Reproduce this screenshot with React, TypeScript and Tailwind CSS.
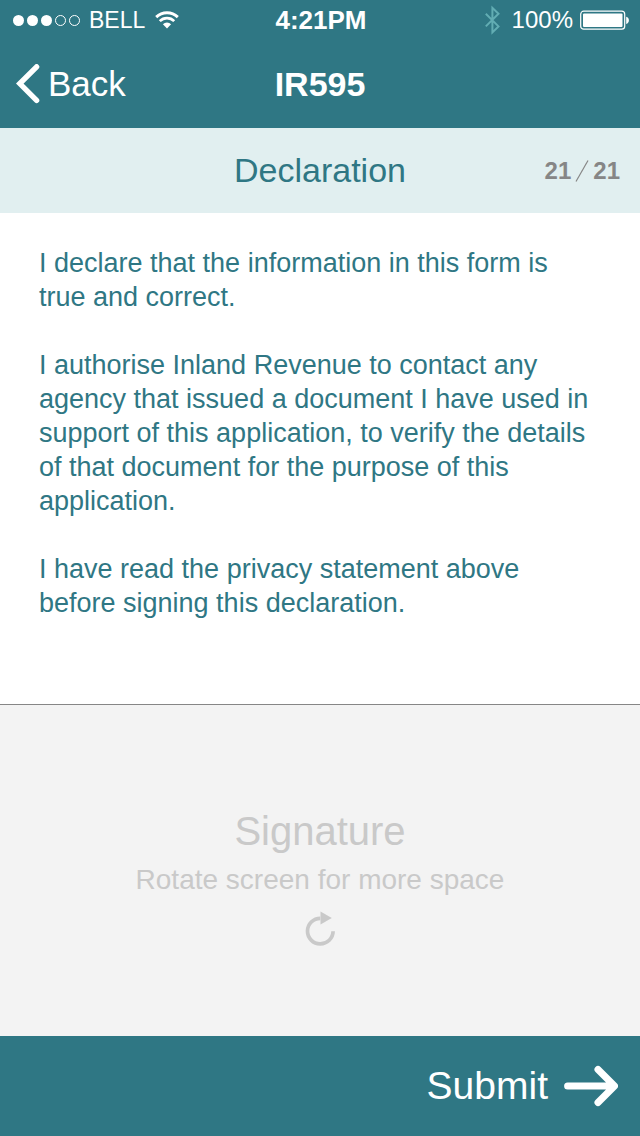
function SignalDots() {
  return (
    <svg viewBox="0 0 68 12" className="h-3 w-17" role="img" aria-label="Signal strength 3 of 5">
      <circle cx="6.5" cy="6.5" r="5.5" fill="#fff" />
      <circle cx="20.5" cy="6.5" r="5.5" fill="#fff" />
      <circle cx="34.5" cy="6.5" r="5.5" fill="#fff" />
      <circle cx="48.5" cy="6.5" r="5" fill="none" stroke="#fff" />
      <circle cx="62.5" cy="6.5" r="5" fill="none" stroke="#fff" />
    </svg>
  );
}

function WifiIcon() {
  return (
    <svg viewBox="0 0 24 18" className="h-[18px] w-6" fill="none" stroke="#fff" aria-hidden="true">
      <path d="M1.2 6.1 A15.5 15.5 0 0 1 22.8 6.1" strokeWidth="2.9" />
      <path d="M4.8 10.1 A10.2 10.2 0 0 1 19.2 10.1" strokeWidth="2.7" />
      <path d="M7.9 13.2 A5.8 5.8 0 0 1 16.1 13.2 L12 17.4 Z" fill="#fff" stroke="none" />
    </svg>
  );
}

function BluetoothIcon() {
  return (
    <svg viewBox="0 0 16 30" className="h-[30px] w-4" fill="none" stroke="#62adb3" strokeWidth="2" aria-hidden="true">
      <path d="M0.8 8.8 L13.5 21.4 L7.4 27.4 V2.8 L13.5 8.8 L0.8 21.4" />
    </svg>
  );
}

function BatteryIcon() {
  return (
    <svg viewBox="0 0 50 20" className="h-5 w-[50px]" aria-hidden="true">
      <rect x="0.7" y="1.2" width="44" height="18" rx="3" fill="none" stroke="#fff" strokeWidth="1.2" />
      <rect x="3" y="3.5" width="39.5" height="13.5" rx="1" fill="#fff" />
      <path d="M46.2 6.8 C49.8 7.6 49.8 13.2 46.2 14 Z" fill="#fff" />
    </svg>
  );
}

function StatusBar() {
  return (
    <div className="grid h-10 grid-cols-[1fr_auto_1fr] items-center pr-[10px] pl-3 text-2xl">
      <div className="flex items-center">
        <SignalDots />
        <span className="ml-[9px] text-[23px]">BELL</span>
        <span className="ml-[10px]">
          <WifiIcon />
        </span>
      </div>
      <span className="text-[26px] font-bold">4:21PM</span>
      <div className="flex items-center justify-end">
        <BluetoothIcon />
        <span className="mr-[7px] ml-[11px]">100%</span>
        <BatteryIcon />
      </div>
    </div>
  );
}

export default function App() {
  return (
    <div className="flex min-h-screen flex-col bg-white font-['Liberation_Sans',Arial,sans-serif]">
      <header className="bg-[#2f7784] text-white">
        <StatusBar />
        <div className="grid h-22 grid-cols-[1fr_auto_1fr] items-center px-4">
          <button type="button" className="flex items-center gap-2 justify-self-start text-[35px]">
            <svg
              viewBox="0 0 24 40"
              className="h-10 w-6"
              fill="none"
              stroke="#fff"
              strokeWidth="5.4"
              strokeLinecap="round"
              aria-hidden="true"
            >
              <path d="M20.6 2.8 L3.8 19.6 L20.6 36.4" />
            </svg>
            Back
          </button>
          <h1 className="text-[34px] font-bold">IR595</h1>
        </div>
      </header>

      <div className="grid h-[85px] grid-cols-[1fr_auto_1fr] items-center bg-[#e1eff0] px-5">
        <h2 className="col-start-2 text-[34px] text-[#2f7784]">Declaration</h2>
        <p className="flex items-center gap-1 justify-self-end text-2xl font-bold text-[#868686]">
          <span>21</span>
          <svg viewBox="0 0 14 24" className="h-6 w-[14px]" stroke="#868686" strokeWidth="1.2" aria-hidden="true">
            <path d="M1 22.5 L13 1.5" />
          </svg>
          <span>21</span>
        </p>
      </div>

      <main className="flex grow flex-col">
        <div className="space-y-[34px] px-[39px] pt-[33px] pb-[84px] text-[27px] leading-[34px] text-[#2f7784]">
          <p>
            I declare that the information in this form is
            <br />
            true and correct.
          </p>
          <p>
            I authorise Inland Revenue to contact any
            <br />
            agency that issued a document I have used in support of this application, to verify the details of that
            document for the purpose of this application.
          </p>
          <p>I have read the privacy statement above before signing this declaration.</p>
        </div>

        <button
          type="button"
          className="flex grow flex-col items-center justify-center border-t border-[#868686] bg-[#f3f3f3] pt-3 text-[#c9c9c9]"
        >
          <span className="text-[40px] leading-[48px]">Signature</span>
          <span className="mt-2 text-[28px] leading-[34px]">Rotate screen for more space</span>
          <svg viewBox="0 0 32 36" className="mt-[14px] h-9 w-8" aria-hidden="true">
            <path d="M16.3 7.3 A12.8 12.8 0 1 0 29.1 20.3" fill="none" stroke="#c9c9c9" strokeWidth="3.7" />
            <path d="M16.5 0.5 L27.8 7 L16.5 13.5 Z" fill="#c9c9c9" />
          </svg>
        </button>
      </main>

      <footer className="flex h-25 items-center justify-end bg-[#2f7784] px-[22px] text-white">
        <button type="button" className="flex items-center gap-4 text-[39px]">
          Submit
          <svg
            viewBox="0 0 54 42"
            className="h-[42px] w-[54px]"
            fill="none"
            stroke="#fff"
            strokeWidth="7"
            strokeLinecap="round"
            strokeLinejoin="round"
            aria-hidden="true"
          >
            <path d="M3.6 21 H49 M34 4.5 L50.5 21 L34 37.5" />
          </svg>
        </button>
      </footer>
    </div>
  );
}
